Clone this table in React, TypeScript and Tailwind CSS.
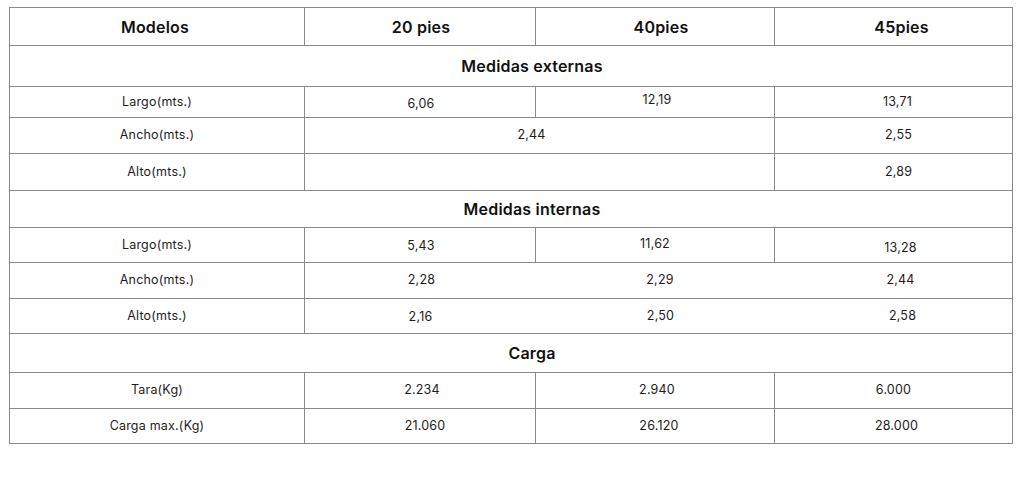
import type { ReactNode } from "react"

// Table of container sizes (Spanish)
const line = "border-[#8a8a8a]"

function Cell({ children, className = "" }: { children?: ReactNode; className?: string }) {
  return (
    <div className={`flex items-center justify-center border-r border-b ${line} ${className}`}>
      {children}
    </div>
  )
}

function Head({ children, className = "" }: { children: ReactNode; className?: string }) {
  return (
    <Cell className={`text-[16px] font-semibold text-[#111] ${className}`}>{children}</Cell>
  )
}

function Section({ title }: { title: string }) {
  return (
    <div
      className={`col-span-4 flex items-center justify-center border-r border-b ${line} pl-[42px] text-[16px] font-semibold text-[#111]`}
    >
      {title}
    </div>
  )
}

function Label({ children }: { children: ReactNode }) {
  return <Cell className="text-[12.5px] tracking-[0.2px] text-[#1c1c1c]">{children}</Cell>
}

export default function App() {
  return (
    <div className="min-h-[503px] w-[1024px] bg-white pt-[7px] pl-[9px]" style={{ fontFamily: "Inter, 'Liberation Sans', sans-serif" }}>
      <div
        className={`grid w-[1004px] grid-cols-[295px_231px_239px_238px] grid-rows-[38px_41px_31px_36px_37px_37px_35px_36px_35px_39px_36px_35px] border-t border-l ${line} text-[12.5px] tracking-[0.2px] text-[#1c1c1c]`}
      >
        {/* header */}
        <Head className="pr-[4px]">Modelos</Head>
        <Head className="pl-[2px]">20 pies</Head>
        <Head className="pl-[12px]">40pies</Head>
        <Head className="pl-[16px]">45pies</Head>

        {/* externas */}
        <Section title="Medidas externas" />
        <Label>Largo(mts.)</Label>
        <Cell className="pl-[2px] pt-[4px]">6,06</Cell>
        <Cell className="pl-[4px] pb-[4px]">12,19</Cell>
        <Cell className="pl-[8px]">13,71</Cell>

        <Label>Ancho(mts.)</Label>
        <Cell className="col-span-2 pr-[16px]">2,44</Cell>
        <Cell className="pl-[10px]">2,55</Cell>

        <Label>Alto(mts.)</Label>
        <Cell className="col-span-2" />
        <Cell className="pl-[10px]">2,89</Cell>

        {/* internas */}
        <Section title="Medidas internas" />
        <Label>Largo(mts.)</Label>
        <Cell className="pl-[2px] pt-[2px]">5,43</Cell>
        <Cell className="pb-[2px]">11,62</Cell>
        <Cell className="pl-[14px] pt-[6px]">13,28</Cell>

        <Label>Ancho(mts.)</Label>
        <div className={`col-span-3 grid grid-cols-[231px_239px_1fr] border-r border-b ${line}`}>
          <div className="flex items-center justify-center pl-[2px]">2,28</div>
          <div className="flex items-center justify-center pl-[9px]">2,29</div>
          <div className="flex items-center justify-center pl-[14px]">2,44</div>
        </div>

        <Label>Alto(mts.)</Label>
        <div className={`col-span-3 grid grid-cols-[231px_239px_1fr] border-r border-b ${line}`}>
          <div className="flex items-center justify-center pt-[2px]">2,16</div>
          <div className="flex items-center justify-center pl-[10px]">2,50</div>
          <div className="flex items-center justify-center pl-[18px]">2,58</div>
        </div>

        {/* carga */}
        <Section title="Carga" />
        <Label>Tara(Kg)</Label>
        <Cell className="pl-[4px]">2.234</Cell>
        <Cell className="pl-[4px]">2.940</Cell>
        <Cell>6.000</Cell>

        <Label>Carga max.(Kg)</Label>
        <Cell className="pl-[10px]">21.060</Cell>
        <Cell className="pl-[8px]">26.120</Cell>
        <Cell className="pl-[6px]">28.000</Cell>
      </div>
    </div>
  )
}
